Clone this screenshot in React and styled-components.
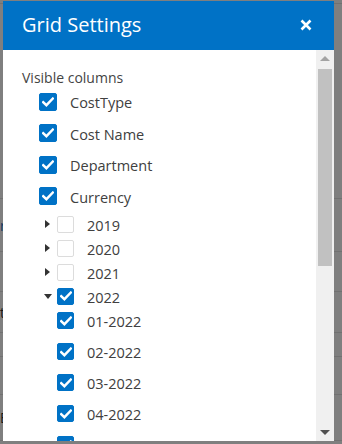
import React from "react";
import styled, { createGlobalStyle } from "styled-components";

const Global = createGlobalStyle`
  html, body { margin: 0; padding: 0; }
  body {
    width: 342px; height: 444px; overflow: hidden; position: relative;
    font-family: "Open Sans", "Noto Sans", sans-serif; background: #fff;
  }
`;

const Page = styled.div`
  display: flex; flex-direction: column; width: 342px; height: 444px;
`;
const PageRow = styled.div`
  display: flex; align-items: center; height: ${p => p.$h}px;
  border-bottom: 1px solid #e2e2e2; box-sizing: border-box;
`;
const EdgeCell = styled.div`
  width: 5px; display: flex; justify-content: flex-start; white-space: nowrap;
  font-size: 14px; color: ${p => p.$link ? "#1f6fc4" : "#333"};
`;

const Overlay = styled.div`
  position: absolute; inset: 0; background: rgba(0, 0, 0, 0.5);
`;

const Dialog = styled.div`
  position: absolute; left: 3px; top: 1px; width: 331px; height: 440px;
  display: flex; flex-direction: column; background: #fff; overflow: hidden;
`;
const Header = styled.div`
  height: 49px; flex: none; background: #0072c6; color: #fff;
  display: flex; align-items: center; justify-content: space-between;
  padding: 0 22px 0 19px;
`;
const Title = styled.div`
  font-size: 20px; line-height: 24px; padding-bottom: 1px;
`;
const CloseBtn = styled.div`
  display: flex; width: 12px; height: 12px; margin-bottom: 2px;
`;
const Body = styled.div`
  flex: 1; display: flex; min-height: 0;
`;
const Content = styled.div`
  flex: 1; overflow: hidden; padding: 16px 0 0 19px; color: #444;
`;
const SectionLabel = styled.div`
  font-size: 14px; line-height: 20px; height: 20px; padding-top: 2px; box-sizing: border-box;
`;
const Row = styled.div`
  display: flex; align-items: center; height: ${p => p.$h}px;
  padding-left: ${p => p.$indent}px;
`;
const Label = styled.span`
  font-size: 14.5px; color: #404040; margin-left: 13px; white-space: nowrap; padding-top: 2px;
`;
const Box = styled.span`
  flex: none; width: ${p => p.$size}px; height: ${p => p.$size}px; box-sizing: border-box;
  border-radius: 2px; display: flex; align-items: center; justify-content: center;
  background: ${p => p.$checked ? "#0072c6" : "#fff"};
  border: 1px solid ${p => p.$checked ? "#0072c6" : "#dcdcdc"};
`;
const Toggle = styled.span`
  width: 13px; flex: none; display: flex; align-items: center;
`;
const Months = styled.div`
  margin-top: -3px;
`;

const Scrollbar = styled.div`
  width: 18px; flex: none; background: #f0f0f0;
  display: flex; flex-direction: column; align-items: center;
`;
const ArrowBtn = styled.div`
  height: 17px; width: 18px; flex: none; display: flex; align-items: center; justify-content: center;
`;
const Track = styled.div`
  flex: 1; width: 14px; display: flex; flex-direction: column;
`;
const Thumb = styled.div`
  width: 14px; height: 197px; background: #c1c1c1; margin-top: 2px;
`;

const Check = () => (
  <svg width="12" height="10" viewBox="0 0 12 10">
    <path d="M1.2 5.2 L4.4 8.2 L10.8 1.6" fill="none" stroke="#fff" strokeWidth="2.4" strokeLinecap="square" />
  </svg>
);

const Checkbox = ({ checked, size = 18 }) => (
  <Box $checked={checked} $size={size}>{checked && <Check />}</Box>
);

const Caret = ({ open }) => (
  <svg width="8" height="8" viewBox="0 0 8 8">
    {open ? <path d="M0 2 L8 2 L4 7 Z" fill="#333" /> : <path d="M1 0 L6 4 L1 8 Z" fill="#333" />}
  </svg>
);

const columns = ["CostType", "Cost Name", "Department", "Currency"];
const years = ["2019", "2020", "2021"];
const months = ["01-2022", "02-2022", "03-2022", "04-2022", "05-2022"];

export default function App() {
  return (
    <>
      <Global />
      <Page>
        <PageRow $h={4} />
        <PageRow $h={195} />
        <PageRow $h={53}><EdgeCell $link>r</EdgeCell></PageRow>
        <PageRow $h={40} />
        <PageRow $h={41}><EdgeCell>t</EdgeCell></PageRow>
        <PageRow $h={24} />
        <PageRow $h={38} />
        <PageRow $h={46}><EdgeCell>E</EdgeCell></PageRow>
      </Page>
      <Overlay />
      <Dialog>
        <Header>
          <Title>Grid Settings</Title>
          <CloseBtn>
            <svg width="12" height="12" viewBox="0 0 12 12">
              <path d="M1.5 1.5 L10.5 10.5 M10.5 1.5 L1.5 10.5" stroke="#fff" strokeWidth="2.6" />
            </svg>
          </CloseBtn>
        </Header>
        <Body>
          <Content>
            <SectionLabel>Visible columns</SectionLabel>
            {columns.map(c => (
              <Row key={c} $h={31.5} $indent={17}>
                <Checkbox checked />
                <Label>{c}</Label>
              </Row>
            ))}
            {years.map(y => (
              <Row key={y} $h={24} $indent={22}>
                <Toggle><Caret /></Toggle>
                <Checkbox size={17} />
                <Label>{y}</Label>
              </Row>
            ))}
            <Row $h={24} $indent={22}>
              <Toggle><Caret open /></Toggle>
              <Checkbox checked size={17} />
              <Label>2022</Label>
            </Row>
            <Months>
              {months.map(m => (
                <Row key={m} $h={31} $indent={35}>
                  <Checkbox checked size={17} />
                  <Label>{m}</Label>
                </Row>
              ))}
            </Months>
          </Content>
          <Scrollbar>
            <ArrowBtn>
              <svg width="10" height="6" viewBox="0 0 10 6"><path d="M0 5 L10 5 L5 0 Z" fill="#a3a3a3" /></svg>
            </ArrowBtn>
            <Track><Thumb /></Track>
            <ArrowBtn>
              <svg width="10" height="6" viewBox="0 0 10 6"><path d="M0 0 L10 0 L5 5 Z" fill="#505050" /></svg>
            </ArrowBtn>
          </Scrollbar>
        </Body>
      </Dialog>
    </>
  );
}
